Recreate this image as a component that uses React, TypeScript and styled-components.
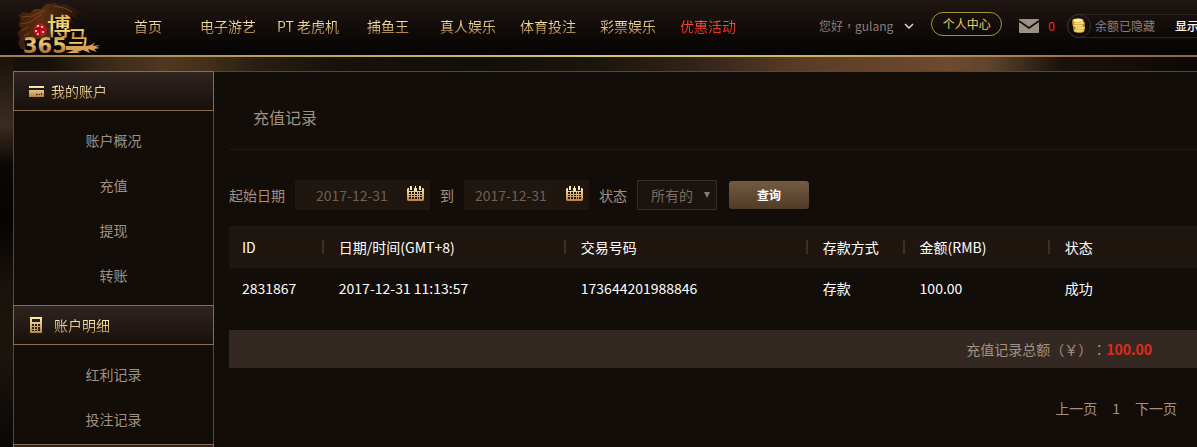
import React from "react";
import styled, { createGlobalStyle } from "styled-components";

const GlobalStyle = createGlobalStyle`
  * { box-sizing: border-box; }
  body {
    margin: 0;
    background: #0a0705;
    color: #a39083;
    font-family: "Noto Sans CJK SC", "Liberation Sans", sans-serif;
    font-size: 14px;
    line-height: 20px;
    text-spacing-trim: space-all;
  }
  a { color: inherit; text-decoration: none; }
  button, input, select { font: inherit; color: inherit; border: 0; padding: 0; background: none; margin: 0; }
  button { cursor: pointer; }
  ul { list-style: none; margin: 0; padding: 0; }
  h1, h2 { margin: 0; font-weight: 400; }
`;

const Page = styled.div`
  display: flex;
  flex-direction: column;
  height: 100vh;
  overflow: hidden;
  background:
    linear-gradient(180deg, #1a120b 57px, #2c2015 95px, #3a2b1e 125px, #0b0704 165px, #050302 220px, #1a130c 290px, #1c150e 350px, #0a0705 447px) left top / 13px 447px no-repeat,
    linear-gradient(90deg, #15100a 0, #17110b 50px, #3a2919 105px, #50371f 165px, #453019 205px, #2a1e13 255px, #17110a 340px, #120e08 480px, #1c150c 600px, #33241a 700px, #5a3c25 800px, #6e4a2e 950px, #5f432b 990px, #1a130c 1060px, #0c0906 1197px);
`;

const Header = styled.header`
  display: flex;
  flex: none;
  height: 57px;
  overflow: hidden;
  padding-left: 13px;
  border-bottom: 2px solid;
  border-image: linear-gradient(90deg, #a17c50, #d6c572 50%, #cdb768 66%, #a06d4c 90%, #8e6550) 1;
  background: linear-gradient(180deg, #201613, #0f0a08 60%, #060403);
`;

const Logo = styled.a`
  display: block;
  flex: none;
  width: 95px;
  height: 55px;
`;

const Nav = styled.nav`
  display: flex;
  flex: none;
`;

const NavLink = styled.a<{ $hot?: boolean }>`
  width: 80px;
  line-height: 52px;
  text-align: center;
  white-space: nowrap;
  color: transparent;
  background: ${(p) =>
    p.$hot
      ? "linear-gradient(180deg, #ff5a3c 19px, #e8301e 32px)"
      : "linear-gradient(180deg, #fff0c0 19px, #e6c98a 26px, #a8824a 33px)"};
  background-clip: text;
  -webkit-background-clip: text;
`;

const Account = styled.div`
  display: flex;
  flex: none;
  align-items: center;
  height: 51px;
  margin-left: 71px;
  font-size: 12px;
  white-space: nowrap;
`;

const UserMenu = styled.button`
  display: flex;
  align-items: center;
  gap: 11px;
  color: #8b7f78;
`;

const Punctuation = styled.span`
  font-family: "Noto Sans CJK TC", sans-serif;
`;

const CenterButton = styled.button`
  width: 71px;
  height: 24px;
  margin: 0 17px 3px;
  border: 1px solid #a89238;
  border-radius: 12px;
  line-height: 20px;
  color: #e8cf6a;
`;

const Mail = styled.a`
  display: flex;
  align-items: center;
  gap: 9px;
  color: #e03a22;
`;

const Balance = styled.div`
  display: flex;
  align-items: center;
  height: 24px;
  width: 180px;
  margin-left: 12px;
  border: 1px solid #2c231f;
  border-radius: 12px;
  color: #8b7f78;
`;

const Coin = styled.span`
  display: flex;
  flex: none;
  align-items: center;
  justify-content: center;
  width: 24px;
  height: 24px;
  margin: 0 4px 0 -1px;
  border: 1px solid #3a302b;
  border-radius: 50%;
`;

const ShowButton = styled.button`
  margin-left: 20px;
  font-weight: 500;
  color: #fff;
`;

const Body = styled.div`
  display: flex;
  flex: 1;
  min-height: 0;
  margin: 14px 0 0 13px;
`;

const Sidebar = styled.aside`
  flex: none;
  width: 201px;
  border: solid #57463a;
  border-width: 0 1px;
  background: #120d09;
`;

const GroupTitle = styled.h2`
  display: flex;
  align-items: center;
  gap: 6px;
  height: 40px;
  margin: 0 -1px;
  padding-left: 15px;
  border: 1px solid #8a6c52;
  font-size: 14px;
  background: linear-gradient(180deg, #30241f, #17100b);
`;

const GoldText = styled.span`
  color: transparent;
  background: linear-gradient(180deg, #fff0c0 4px, #e6c98a 11px, #a8824a 18px);
  background-clip: text;
  -webkit-background-clip: text;
`;

const GroupList = styled.ul<{ $tight?: boolean }>`
  padding: 7px 0 ${(p) => (p.$tight ? 2 : 7)}px;
  text-align: center;
  line-height: 45px;
`;

const Main = styled.main`
  flex: 1;
  min-width: 0;
  padding-left: 15px;
  border-top: 1px solid #57463a;
  background: #120d09;
`;

const Title = styled.h1`
  height: 78px;
  padding: 33px 0 0 24px;
  border-bottom: 1px solid #1f1914;
  font-size: 16px;
  line-height: 24px;
`;

const Filters = styled.form`
  display: flex;
  align-items: center;
  gap: 10px;
  height: 30px;
  margin: 30px 0 16px;
  white-space: nowrap;
`;

const DateBox = styled.div<{ $wide?: boolean }>`
  display: flex;
  align-items: center;
  width: ${(p) => (p.$wide ? 135 : 125)}px;
  height: 30px;
  padding: 0 6px 0 ${(p) => (p.$wide ? 21 : 11)}px;
  background: #1f1610;
  color: #6d6057;
`;

const DateInput = styled.input`
  flex: 1;
  min-width: 0;
  height: 30px;
  outline: 0;
`;

const CalendarButton = styled.button`
  display: flex;
  margin-bottom: 4px;
`;

const SelectBox = styled.div`
  position: relative;
  width: 80px;
  height: 30px;
  border: 1px solid #362b25;
  background: #1a130e;
  color: #7b6c62;
`;

const Select = styled.select`
  appearance: none;
  width: 100%;
  height: 28px;
  padding-left: 13px;
  outline: 0;
`;

const Arrow = styled.svg`
  position: absolute;
  right: 6px;
  top: 11px;
  pointer-events: none;
`;

const SearchButton = styled.button`
  width: 80px;
  height: 28px;
  margin-left: 2px;
  border-radius: 3px;
  font-size: 12px;
  font-weight: 700;
  color: #fff;
  background: linear-gradient(180deg, #745a41, #4f3c29);
`;

const Table = styled.table`
  width: 100%;
  table-layout: fixed;
  border-collapse: collapse;
  color: #fff;
`;

const HeadCell = styled.th<{ $width: number }>`
  width: ${(p) => p.$width}%;
  height: 42px;
  padding: 0 2px 0 13px;
  background: #1f1610;
  font-weight: 400;
  text-align: left;
  white-space: nowrap;
`;

const HeadLabel = styled.div<{ $last?: boolean }>`
  display: flex;
  align-items: center;
  justify-content: space-between;

  &::after {
    content: "";
    width: ${(p) => (p.$last ? 0 : 2)}px;
    height: 14px;
    background: #3d3028;
  }
`;

const Cell = styled.td`
  height: 42px;
  padding: 0 0 2px 13px;
  white-space: nowrap;
`;

const Total = styled.div`
  margin-top: 20px;
  padding-right: 45px;
  background: #342922;
  line-height: 38px;
  text-align: right;
`;

const Amount = styled.strong`
  color: #e0281a;
`;

const Pager = styled.nav`
  display: flex;
  justify-content: flex-end;
  gap: 15px;
  padding: 30px 20px 0 0;
`;

const links = ["首页", "电子游艺", "PT 老虎机", "捕鱼王", "真人娱乐", "体育投注", "彩票娱乐", "优惠活动"];

const columns: [string, number][] = [
  ["ID", 10],
  ["日期/时间(GMT+8)", 25],
  ["交易号码", 25],
  ["存款方式", 10],
  ["金额(RMB)", 15],
  ["状态", 15],
];

const records = [["2831867", "2017-12-31 11:13:57", "173644201988846", "存款", "100.00", "成功"]];

const LogoArt = () => (
  <svg width="95" height="55" viewBox="13 0 95 55" role="img" aria-label="博马365">
    <defs>
      <linearGradient id="logoGold" x1="0" y1="12" x2="0" y2="54" gradientUnits="userSpaceOnUse">
        <stop offset="0" stopColor="#d9b04a" />
        <stop offset=".4" stopColor="#f8e58a" />
        <stop offset=".58" stopColor="#c98d3a" />
        <stop offset=".72" stopColor="#f0cf74" />
        <stop offset="1" stopColor="#a3622a" />
      </linearGradient>
      <linearGradient id="dragon" x1="17" y1="0" x2="86" y2="0" gradientUnits="userSpaceOnUse">
        <stop offset="0" stopColor="#3a1d0c" />
        <stop offset=".35" stopColor="#5a2f12" />
        <stop offset="1" stopColor="#1c0f09" />
      </linearGradient>
    </defs>
    <path
      d="M21 49 18 43 20 38 17 33 21 29 18 24 21 20 18 15 23 12 30 13 34 9 41 9 46 4 54 3 60 5 66 4 74 8 86 16 75 13 79 20 70 15 74 24 62 18 54 16 50 38 24 40 26 50Z"
      fill="url(#dragon)"
    />
    <path d="M22 17 33 16 45 10M21 24 30 22 42 14M21 31 28 27M54 6 64 8 72 12M24 36 29 33" fill="none" stroke="#7a431c" strokeWidth="1" />
    <g fontFamily='"Noto Sans CJK SC", sans-serif' fontWeight="500" fill="url(#logoGold)">
      <text x="47" y="35" fontSize="24">博</text>
      <text x="68" y="46" fontSize="20">马</text>
    </g>
    <path d="M66 46h18c5 0 8-1 11-4l-2 4 7-1-4 2 4 1-6 1 3 3-9-3 2 4-7-3-6 2 4 1H66l8-3h-8Z" fill="#d8a055" />
    <text x="23" y="53" fontSize="21" fontFamily='"DejaVu Sans", sans-serif' fontWeight="700" fill="url(#logoGold)">
      365
    </text>
    <circle cx="40" cy="30" r="6.5" fill="#c8141f" />
    <path d="m34 30 5-2 6 2M39 28l1 8" stroke="#7d0910" fill="none" />
    <g fill="#fff">
      <circle cx="38" cy="26" r=".9" />
      <circle cx="42" cy="27" r=".9" />
      <circle cx="36" cy="31" r=".9" />
      <circle cx="38" cy="34" r=".9" />
      <circle cx="43" cy="32" r=".9" />
    </g>
  </svg>
);

const CardIcon = () => (
  <svg width="16" height="12" viewBox="0 0 16 12" aria-hidden="true">
    <defs>
      <linearGradient id="cardGold" x1="0" y1="0" x2="0" y2="1">
        <stop offset="0" stopColor="#ffedb4" />
        <stop offset="1" stopColor="#b58243" />
      </linearGradient>
    </defs>
    <path d="M0 1h15v2H0zM0 5h15v7H0z" fill="url(#cardGold)" />
    <path d="M7 9h2v1H7zM10 9h1v1h-1zM12 8h1v2h-1z" fill="#3b2818" />
  </svg>
);

const CalculatorIcon = () => (
  <svg width="19" height="16" viewBox="-1 0 19 16" aria-hidden="true">
    <path d="M0 0h12v16H0z" fill="url(#cardGold)" />
    <path d="M2 2h8v3H2zM2 7h2v2H2zM5 7h2v2H5zM8 7h2v2H8zM2 10h2v2H2zM5 10h2v2H5zM8 10h2v4H8zM2 13h2v1H2zM5 13h2v1H5z" fill="#2a1d13" />
  </svg>
);

const CalendarIcon = () => (
  <svg width="17" height="15" viewBox="0 0 17 15" aria-hidden="true">
    <path d="M1 2h1v3h5V2h3v3h5V2h1l1 1v11l-1 1H1l-1-1V3z" fill="url(#cardGold)" />
    <path d="M3 0h2v4H3zM8 0h1v3H8zM12 0h2v4h-2z" fill="#ffe9b0" />
    <path d="M2 6h2v2H2zM5 6h2v2H5zM8 6h2v2H8zM11 6h1v2h-1zM13 6h2v2h-2zM2 9h2v1H2zM5 9h2v1H5zM8 9h2v1H8zM11 9h1v1h-1zM13 9h2v1h-2zM2 11h2v2H2zM5 11h2v2H5zM8 11h2v2H8zM11 11h1v2h-1zM13 11h2v2h-2z" fill="#1f1610" />
  </svg>
);

const CoinIcon = () => (
  <svg width="14" height="15" viewBox="0 0 14 15" aria-hidden="true">
    <path d="M1 1h10l1 3 1 3v4l-1 3-4 1-6-1-1-3V8L0 6V3z" fill="#a8781c" />
    <g fill="#f7dd77" stroke="#c29630" strokeWidth=".5">
      <ellipse cx="7" cy="12.5" rx="5" ry="1.8" />
      <ellipse cx="8" cy="10" rx="5" ry="1.8" />
      <ellipse cx="6" cy="7.5" rx="5" ry="1.8" />
      <ellipse cx="7" cy="5" rx="5.5" ry="1.8" />
      <ellipse cx="6" cy="2.5" rx="5" ry="2" fill="#fff0a6" />
    </g>
  </svg>
);

type MenuGroupProps = { icon: React.ReactNode; title: string; items: string[]; tight?: boolean };

const MenuGroup = ({ icon, title, items, tight }: MenuGroupProps) => (
  <section>
    <GroupTitle>
      {icon}
      <GoldText>{title}</GoldText>
    </GroupTitle>
    <GroupList $tight={tight}>
      {items.map((item) => (
        <li key={item}>
          <a href="#">{item}</a>
        </li>
      ))}
    </GroupList>
  </section>
);

export default function App() {
  return (
    <>
      <GlobalStyle />
      <Page>
        <Header>
          <Logo href="#">
            <LogoArt />
          </Logo>
          <Nav>
            {links.map((text) => (
              <NavLink href="#" key={text} $hot={text === "优惠活动"}>
                {text}
              </NavLink>
            ))}
          </Nav>
          <Account>
            <UserMenu type="button">
              <span>
                您好<Punctuation lang="zh-TW">，</Punctuation>gulang
              </span>
              <svg width="10" height="6" viewBox="0 0 10 6" aria-hidden="true">
                <path d="m1 1 4 4 4-4" fill="none" stroke="#e6e0da" strokeWidth="1.4" />
              </svg>
            </UserMenu>
            <CenterButton type="button">个人中心</CenterButton>
            <Mail href="#">
              <svg width="20" height="14" viewBox="0 0 20 14" aria-hidden="true">
                <rect width="20" height="14" rx="1" fill="#9c9087" />
                <path d="m0 2 10 7 10-7" fill="none" stroke="#120c0a" strokeWidth="1.6" />
              </svg>
              0
            </Mail>
            <Balance>
              <Coin>
                <CoinIcon />
              </Coin>
              余额已隐藏
              <ShowButton type="button">显示</ShowButton>
            </Balance>
          </Account>
        </Header>
        <Body>
          <Sidebar>
            <MenuGroup icon={<CardIcon />} title="我的账户" items={["账户概况", "充值", "提现", "转账"]} />
            <MenuGroup icon={<CalculatorIcon />} title="账户明细" items={["红利记录", "投注记录"]} tight />
            <GroupTitle as="div" />
          </Sidebar>
          <Main>
            <Title>充值记录</Title>
            <Filters onSubmit={(e) => e.preventDefault()}>
              <label htmlFor="from">起始日期</label>
              <DateBox $wide>
                <DateInput id="from" defaultValue="2017-12-31" />
                <CalendarButton type="button" aria-label="选择起始日期">
                  <CalendarIcon />
                </CalendarButton>
              </DateBox>
              <label htmlFor="to">到</label>
              <DateBox>
                <DateInput id="to" defaultValue="2017-12-31" />
                <CalendarButton type="button" aria-label="选择结束日期">
                  <CalendarIcon />
                </CalendarButton>
              </DateBox>
              <label htmlFor="state">状态</label>
              <SelectBox>
                <Select id="state">
                  <option>所有的</option>
                </Select>
                <Arrow width="6" height="6" viewBox="0 0 6 6" aria-hidden="true">
                  <path d="M0 0h6L3 6z" fill="#8b7a6e" />
                </Arrow>
              </SelectBox>
              <SearchButton type="submit">查询</SearchButton>
            </Filters>
            <Table>
              <thead>
                <tr>
                  {columns.map(([label, width], i) => (
                    <HeadCell key={label} $width={width} scope="col">
                      <HeadLabel $last={i === columns.length - 1}>{label}</HeadLabel>
                    </HeadCell>
                  ))}
                </tr>
              </thead>
              <tbody>
                {records.map((row) => (
                  <tr key={row[0]}>
                    {row.map((value) => (
                      <Cell key={value}>{value}</Cell>
                    ))}
                  </tr>
                ))}
              </tbody>
            </Table>
            <Total>
              充值记录总额<Punctuation lang="zh-TW">（￥）：</Punctuation>
              <Amount>100.00</Amount>
            </Total>
            <Pager>
              <a href="#">上一页</a>
              <a href="#">1</a>
              <a href="#">下一页</a>
            </Pager>
          </Main>
        </Body>
      </Page>
    </>
  );
}
